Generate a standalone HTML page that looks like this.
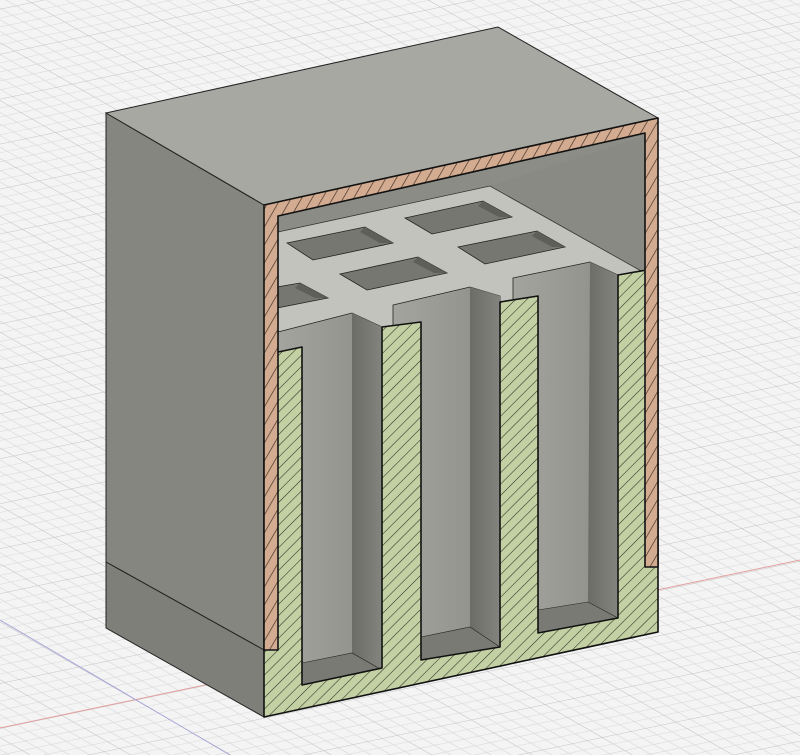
<!DOCTYPE html>
<html><head><meta charset="utf-8"><style>html,body{margin:0;padding:0;background:#f3f3f3;overflow:hidden}svg{display:block}</style></head>
<body>
<svg width="800" height="755" viewBox="0 0 800 755" xmlns="http://www.w3.org/2000/svg">
<defs>
<pattern id="grid" width="110" height="110" patternUnits="userSpaceOnUse" patternTransform="matrix(0.67,-0.14,0.52,0.30,135,700)">
<rect width="110" height="110" fill="#f4f4f4"/>
<g stroke="#dcdcdc" stroke-width="1.6">
<line x1="22" y1="0" x2="22" y2="110"/><line x1="44" y1="0" x2="44" y2="110"/><line x1="66" y1="0" x2="66" y2="110"/><line x1="88" y1="0" x2="88" y2="110"/>
<line y1="22" x1="0" y2="22" x2="110"/><line y1="44" x1="0" y2="44" x2="110"/><line y1="66" x1="0" y2="66" x2="110"/><line y1="88" x1="0" y2="88" x2="110"/>
</g>
<g stroke="#c4c4c4" stroke-width="2.4"><line x1="0" y1="0" x2="0" y2="110"/><line x1="0" y1="0" x2="110" y2="0"/></g>
</pattern>
<pattern id="hg" width="8" height="8" patternUnits="userSpaceOnUse" patternTransform="rotate(-45)">
<rect width="8" height="8" fill="#c3d0a4"/><line x1="0" y1="0" x2="8" y2="0" stroke="#2a2e22" stroke-width="1.1"/>
</pattern>
<pattern id="hc" width="9" height="9" patternUnits="userSpaceOnUse" patternTransform="rotate(-60)">
<rect width="9" height="9" fill="#d3ab90"/><line x1="0" y1="0" x2="9" y2="0" stroke="#3a2a20" stroke-width="1.3"/>
</pattern>
<linearGradient id="pk" x1="0" y1="0" x2="1" y2="0"><stop offset="0" stop-color="#a4a49e"/><stop offset="1" stop-color="#8e8e89"/></linearGradient>
<linearGradient id="pkr" x1="0" y1="0" x2="1" y2="0"><stop offset="0" stop-color="#6c6c67"/><stop offset="1" stop-color="#84847f"/></linearGradient>
</defs>
<rect width="800" height="755" fill="url(#grid)"/>
<line x1="0" y1="728" x2="800" y2="560" stroke="#e4a0a0" stroke-width="1"/>
<line x1="0" y1="620" x2="230" y2="755" stroke="#a8a8d8" stroke-width="1"/>
<polygon points="106,113 264,205 264,650 106,562" fill="#868681" stroke="#222" stroke-width="1"/>
<polygon points="106,562 264,650 264,717 106,628" fill="#7f7f7a" stroke="#222" stroke-width="1"/>
<polygon points="106,113 498,27 658,118 264,205" fill="#a7a8a2" stroke="#222" stroke-width="1"/>
<polygon points="278,216 645,133 645,272 278,345" fill="#8d8d88"/>
<polygon points="490,186 645,136 645,272" fill="#8a8a85"/>
<polygon points="278,216 490,170 490,186 278,232" fill="#8c8c87"/>
<polygon points="278,232 490,186 643,272 278,355" fill="#c3c3bd" stroke="#333" stroke-width="0.8"/>
<g fill="#777772" stroke="#222" stroke-width="0.8">
<polygon points="287,243 365,227 393,243 313,260"/>
<polygon points="405,218 483,201 512,217 432,234"/>
<polygon points="340,274 418,257 447,273 367,290"/>
<polygon points="458,247 537,231 565,247 485,264"/>
<polygon points="277,287 300,283 328,298 277,308"/>
</g>
<g fill="#5f5f5a"><polygon points="365,227 393,243 380,243 360,232"/><polygon points="483,201 512,217 499,217 478,206"/><polygon points="418,257 447,273 434,273 413,262"/><polygon points="537,231 565,247 552,247 532,236"/><polygon points="300,283 328,298 315,298 295,288"/></g>
<polygon points="278,332 352,313 382,327 382,672 302,685 278,690" fill="url(#pk)" stroke="#222" stroke-width="0.8"/>
<polygon points="352,313 382,327 382,670 352,653" fill="url(#pkr)"/>
<polygon points="302,663 352,653 382,670 302,685" fill="#7a7a75" stroke="#222" stroke-width="0.6"/>
<polygon points="393,305 470,287 500,296 500,647 421,660 393,665" fill="url(#pk)" stroke="#222" stroke-width="0.8"/>
<polygon points="470,287 500,296 500,647 470,627" fill="url(#pkr)"/>
<polygon points="421,637 470,627 500,647 421,660" fill="#7a7a75" stroke="#222" stroke-width="0.6"/>
<polygon points="513,278 590,262 618,275 618,618 538,633 513,640" fill="url(#pk)" stroke="#222" stroke-width="0.8"/>
<polygon points="590,262 618,275 618,618 588,602" fill="url(#pkr)"/>
<polygon points="538,610 588,602 618,618 538,633" fill="#7a7a75" stroke="#222" stroke-width="0.6"/>
<polygon points="264,717 264,355 302,347 302,685 382,668 382,327 421,322 421,660 500,647 500,302 538,296 538,633 618,618 618,275 658,268 658,632" fill="url(#hg)" stroke="#111" stroke-width="1.6" stroke-linejoin="round"/>
<polygon points="264,205 658,118 658,567 645,567 645,133 278,216 278,650 264,650" fill="url(#hc)" stroke="#111" stroke-width="1.6" stroke-linejoin="round"/>
</svg>
</body></html>
